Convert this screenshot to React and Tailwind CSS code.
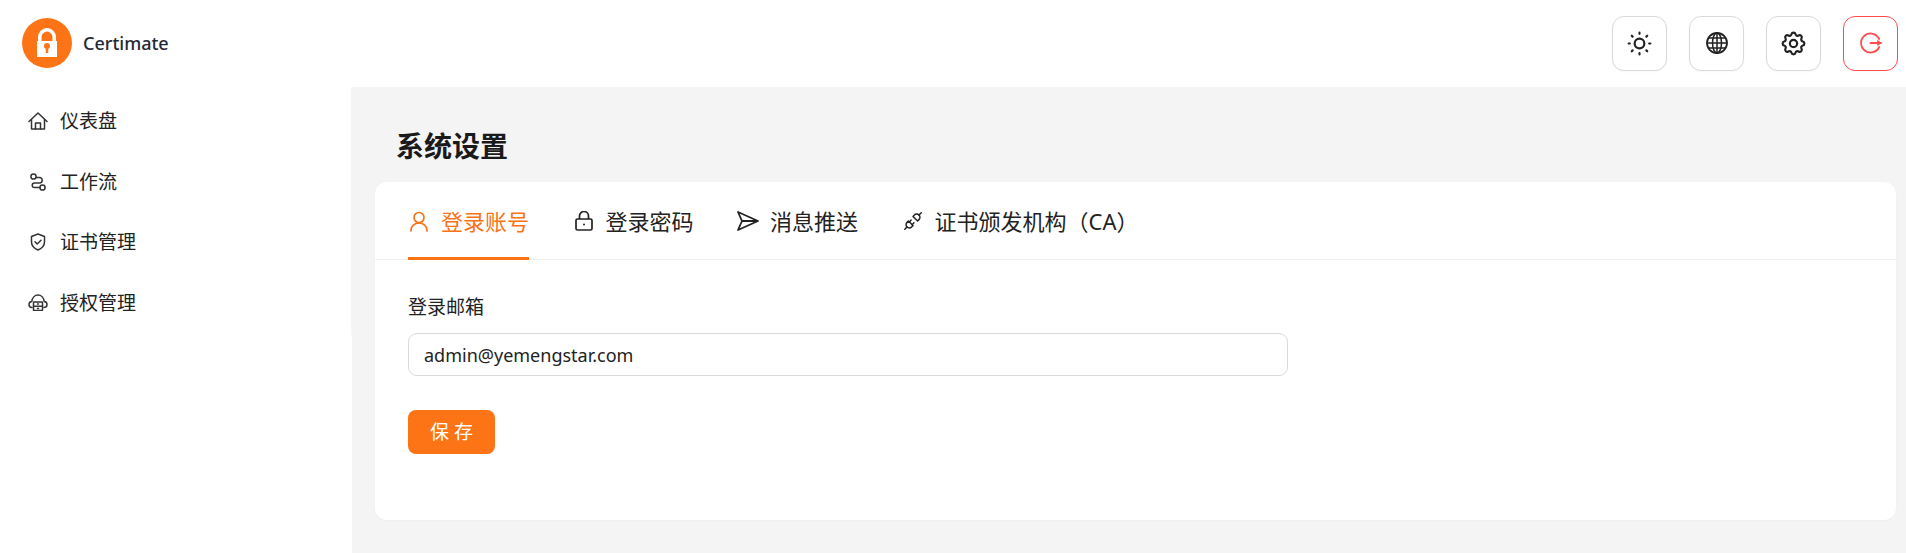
import React from "react";
import { TbSun, TbSettings, TbPlugConnected } from "react-icons/tb";

const FONT = "font-['Noto_Sans','Noto_Sans_CJK_SC',sans-serif]";

function Logo() {
  return (
    <svg width="50" height="50" viewBox="0 0 50 50">
      <circle cx="25" cy="25" r="25" fill="#fd7417" />
      <path d="M17.800 24V19a7.200 7.200 0 0 1 14.400 0v5" fill="none" stroke="#fff" strokeWidth="3.500" />
      <rect x="15" y="23" width="20" height="16" fill="#fff" />
      <circle cx="25" cy="28" r="3" fill="#fd7417" />
      <rect x="23.800" y="29" width="2.400" height="6" fill="#fd7417" />
    </svg>
  );
}

function HomeIcon() {
  return (
    <svg width="20" height="18" viewBox="0 0 20 18" fill="none" stroke="currentColor" strokeWidth="1.500" strokeLinecap="round" strokeLinejoin="round">
      <path d="M1 9.500 10 1l9 8.500" />
      <path d="M3.500 7.500V17h13V7.500" />
      <path d="M7.500 17v-6h5v6" />
    </svg>
  );
}

function RouteIcon() {
  return (
    <svg width="20" height="20" viewBox="0 0 20 20" fill="none" stroke="currentColor" strokeWidth="1.500" strokeLinecap="round">
      <circle cx="5.500" cy="4.500" r="2.600" />
      <circle cx="14.500" cy="15.500" r="2.600" />
      <path d="M8 5.500h3.500a2.700 2.700 0 0 1 0 5.400H6.500a2.300 2.300 0 0 0 0 4.600H12" />
    </svg>
  );
}

function ShieldIcon() {
  return (
    <svg width="16" height="18" viewBox="0 0 16 18" fill="none" stroke="currentColor" strokeWidth="1.500" strokeLinecap="round" strokeLinejoin="round">
      <path d="M8 1l6.500 2.500V9c0 4-3 6.500-6.500 8C4.500 15.500 1.500 13 1.500 9V3.500z" />
      <path d="M5 8.800l2.200 2.200 3.800-3.800" />
    </svg>
  );
}

function CloudIcon() {
  return (
    <svg width="20" height="17" viewBox="0 0 20 17" fill="none" stroke="currentColor" strokeWidth="1.500" strokeLinecap="round" strokeLinejoin="round">
      <path d="M4 13.500C2 13.500 1 12 1 10.500 1 8.800 2.300 7.600 3.800 7.500 4.300 3.500 7 1 10 1s5.700 2.500 6.200 6.500c1.500.1 2.800 1.300 2.800 3 0 1.500-1 3-3 3" />
      <rect x="5.500" y="8" width="9" height="8.500" rx=".5" fill="#fff" />
      <path d="M5.500 12.200h9M9.500 10.100h1M9.500 14.400h1" />
    </svg>
  );
}

function GlobeIcon() {
  return (
    <svg width="22" height="22" viewBox="0 0 22 22" fill="none" stroke="#222" strokeWidth="1.500">
      <circle cx="11" cy="11" r="10" strokeWidth="1.800" />
      <ellipse cx="11" cy="11" rx="4.500" ry="10" />
      <path d="M11 1v20M1 11h20M2.500 6h17M2.500 16h17" />
    </svg>
  );
}

function LogoutIcon() {
  return (
    <svg width="22" height="22" viewBox="0 0 22 22" fill="none" stroke="#ff4d4f" strokeWidth="1.800" strokeLinecap="round" strokeLinejoin="round">
      <path d="M19.200 7A9.500 9.500 0 1 0 19.200 15" />
      <path d="M10.500 11H21" strokeWidth="2" />
      <path d="M18 8.800 21 11 18 13.200z" fill="#ff4d4f" strokeWidth="1" />
    </svg>
  );
}

function UserIcon() {
  return (
    <svg width="18" height="21" viewBox="0 0 18 21" fill="none" stroke="currentColor" strokeWidth="1.700" strokeLinecap="round">
      <circle cx="9" cy="6.500" r="5" />
      <path d="M1 20v-1a8 7 0 0 1 16 0v1" />
    </svg>
  );
}

function LockIcon() {
  return (
    <svg width="18" height="20" viewBox="0 0 18 20" fill="none" stroke="currentColor" strokeWidth="1.700" strokeLinejoin="round">
      <rect x="1" y="8" width="16" height="11" rx="1.500" />
      <path d="M4.500 8V5a4.500 4.500 0 0 1 9 0v3" />
      <circle cx="9" cy="13.500" r="1" fill="currentColor" stroke="none" />
    </svg>
  );
}

function SendIcon() {
  return (
    <svg width="22" height="20" viewBox="0 0 22 20" fill="none" stroke="currentColor" strokeWidth="1.800" strokeLinejoin="round">
      <path d="M1 1l20 9L1 19l4-9zM5 10h16" />
    </svg>
  );
}

function NavItem({ icon, label }) {
  return (
    <div className="flex h-[60.500px] items-center gap-[12px] pl-[27px] text-[19px] text-[#222]">
      <span className="flex w-[21px] justify-center text-[#333]">{icon}</span>
      <span>{label}</span>
    </div>
  );
}

function HeaderButton({ children, danger }) {
  return (
    <button
      className={
        "flex h-[55px] w-[55px] items-center justify-center rounded-[12px] border bg-white shadow-[0_1px_2px_rgba(0,0,0,0.03)] " +
        (danger ? "border-[#ff4d4f]" : "border-[#d9d9d9]")
      }
    >
      {children}
    </button>
  );
}

function Tab({ icon, label, active }) {
  return (
    <div
      className={
        "-mb-px flex h-[78px] items-center gap-[11px] border-b-[3px] pt-[3px] text-[22px] " +
        (active ? "border-[#f97316] text-[#f97316]" : "border-transparent text-[#222]")
      }
    >
      <span className="flex w-[22px] justify-center">{icon}</span>
      <span>{label}</span>
    </div>
  );
}

export default function App() {
  return (
    <div className={"flex h-[553px] flex-col overflow-hidden bg-white " + FONT}>
      <header className="flex h-[87px] shrink-0 items-center justify-between pb-[1px] pl-[22px] pr-[8px]">
        <div className="flex items-center gap-[11px]">
          <Logo />
          <span className="pt-[1px] text-[18px] font-medium text-[#1f2937]">Certimate</span>
        </div>
        <div className="flex items-center gap-[22px]">
          <HeaderButton><TbSun size={29} color="#222" strokeWidth={1.800} /></HeaderButton>
          <HeaderButton><GlobeIcon /></HeaderButton>
          <HeaderButton><TbSettings size={29} color="#222" strokeWidth={1.800} /></HeaderButton>
          <HeaderButton danger><LogoutIcon /></HeaderButton>
        </div>
      </header>
      <div className="flex min-h-0 flex-1">
        <aside className="w-[352px] shrink-0">
          <div className="h-[248px] border-r border-[#f5f5f5] pt-[4px]">
            <NavItem icon={<HomeIcon />} label="仪表盘" />
            <NavItem icon={<RouteIcon />} label="工作流" />
            <NavItem icon={<ShieldIcon />} label="证书管理" />
            <NavItem icon={<CloudIcon />} label="授权管理" />
          </div>
        </aside>
        <main className="flex-1 bg-[#f4f4f4] pl-[23px] pr-[10px]">
          <h1 className="mt-[39px] ml-[21px] text-[28px] font-bold leading-[41px] text-[#1a1a1a]">系统设置</h1>
          <section className="mt-[15px] h-[338px] rounded-[12px] bg-white shadow-[0_1px_2px_rgba(0,0,0,0.03)]">
            <div className="flex gap-[43.500px] border-b border-[#f0f0f0] pl-[33px]">
              <Tab active icon={<UserIcon />} label="登录账号" />
              <Tab icon={<LockIcon />} label="登录密码" />
              <Tab icon={<SendIcon />} label="消息推送" />
              <Tab icon={<TbPlugConnected size={28} strokeWidth={1.600} />} label="证书颁发机构（CA）" />
            </div>
            <div className="pl-[33px] pt-[32px]">
              <label className="block text-[19px] leading-[30px] text-[#222]">登录邮箱</label>
              <input
                readOnly
                value="admin@yemengstar.com"
                className="mt-[11px] block h-[43px] w-[880px] rounded-[9px] border border-[#d9d9d9] bg-white px-[15px] text-[18px] text-[#222] outline-none"
              />
              <button className="mt-[34px] flex h-[44px] w-[87px] items-center justify-center rounded-[8px] bg-[#fd7417] text-[19px] text-white">
                保 存
              </button>
            </div>
          </section>
        </main>
      </div>
    </div>
  );
}
